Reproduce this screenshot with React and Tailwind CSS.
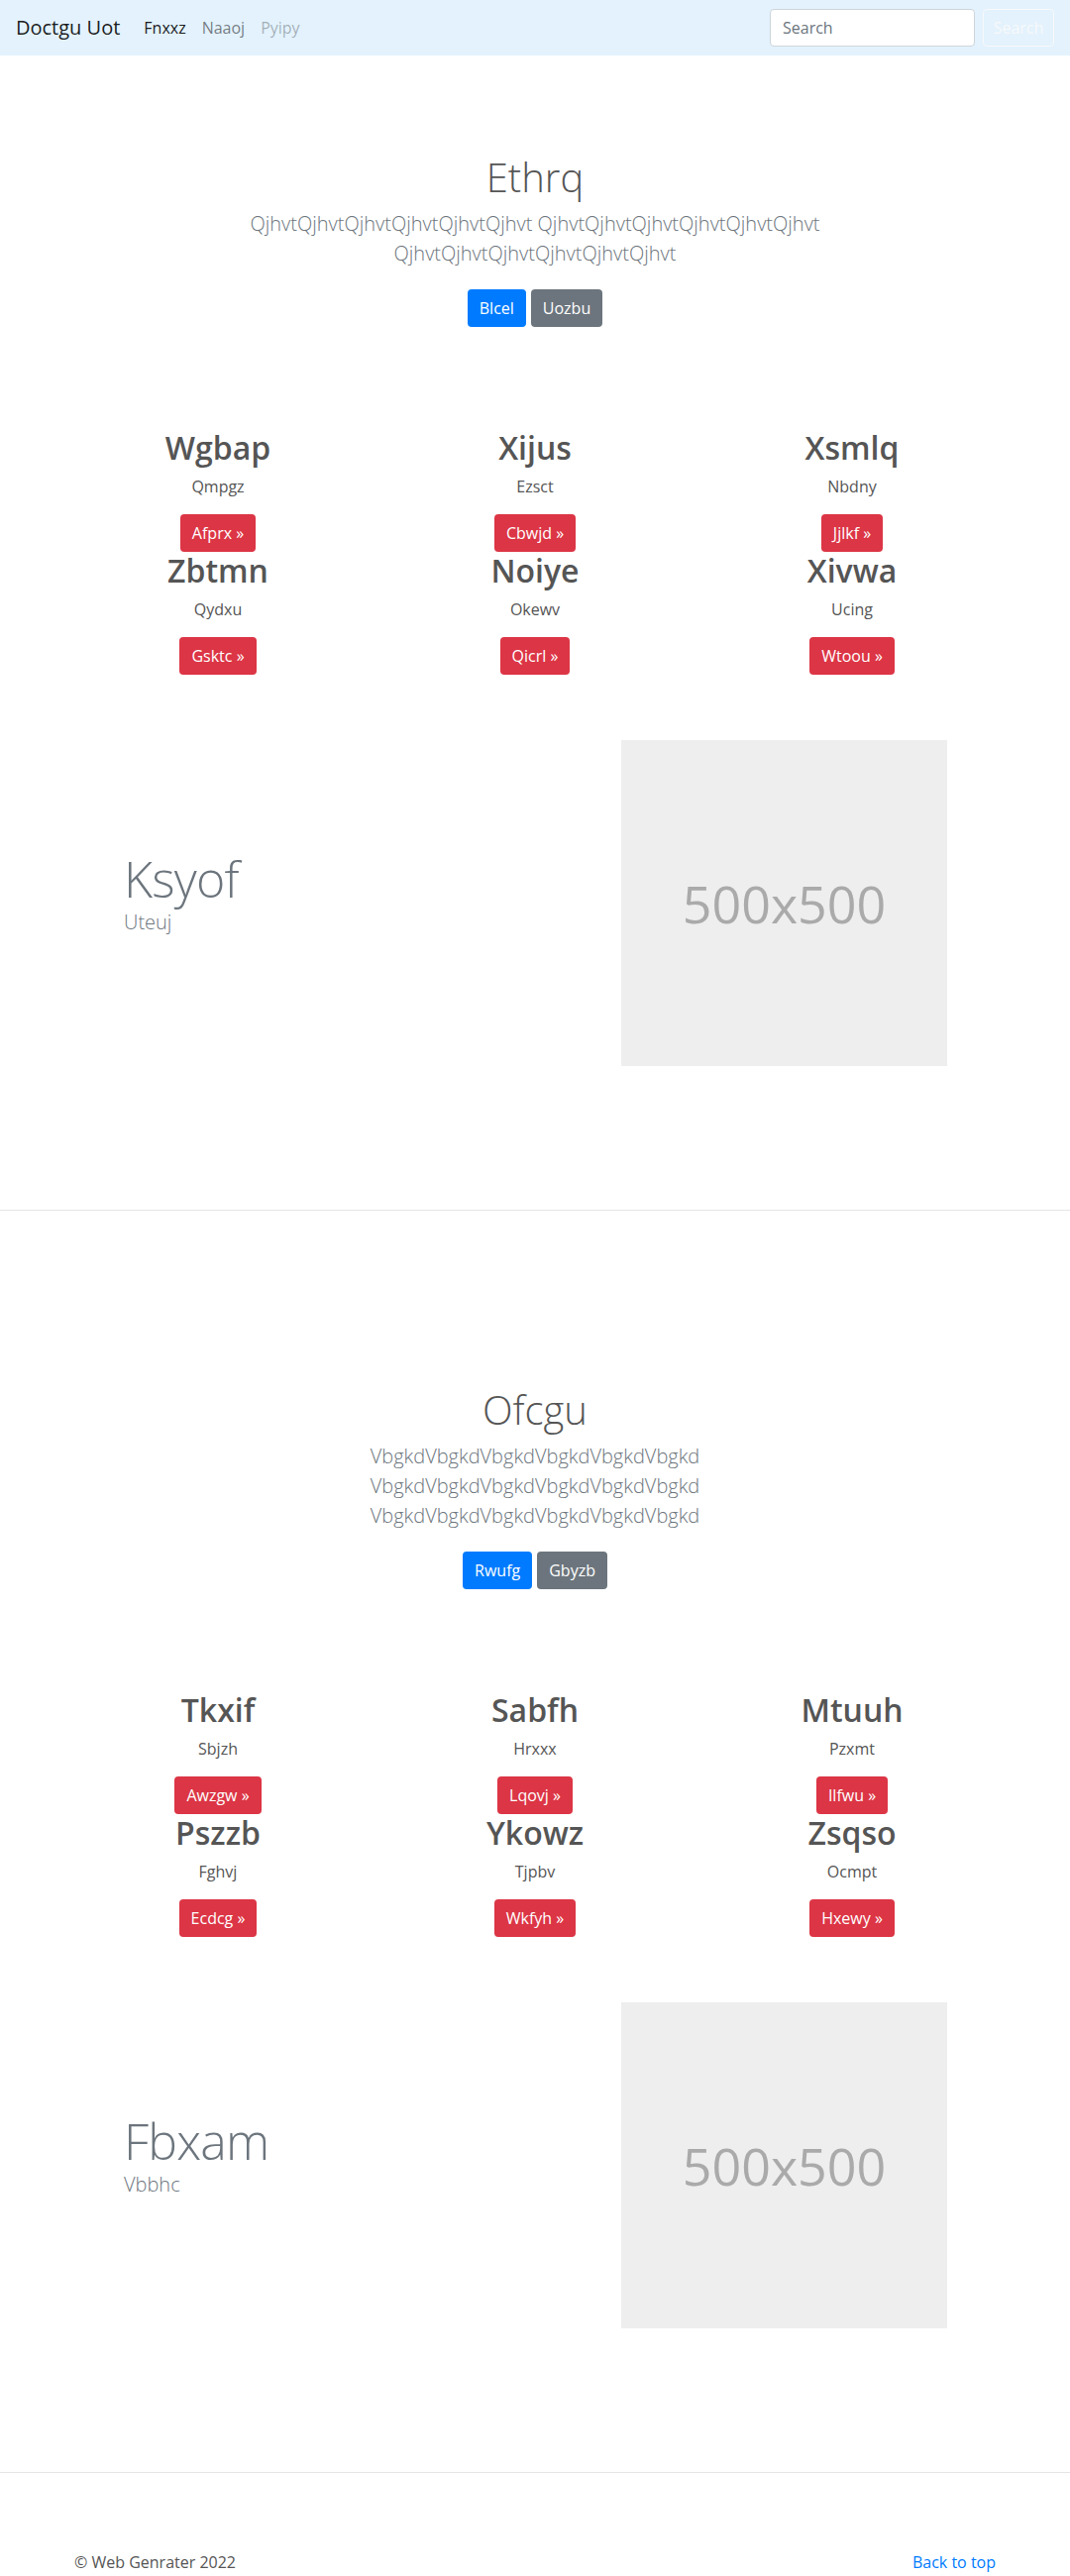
import React from "react";

const sections = [
  {
    title: "Ethrq",
    lead: "QjhvtQjhvtQjhvtQjhvtQjhvtQjhvt QjhvtQjhvtQjhvtQjhvtQjhvtQjhvt QjhvtQjhvtQjhvtQjhvtQjhvtQjhvt",
    primary: "Blcel",
    secondary: "Uozbu",
    features: [
      { title: "Wgbap", text: "Qmpgz", action: "Afprx" },
      { title: "Xijus", text: "Ezsct", action: "Cbwjd" },
      { title: "Xsmlq", text: "Nbdny", action: "Jjlkf" },
      { title: "Zbtmn", text: "Qydxu", action: "Gsktc" },
      { title: "Noiye", text: "Okewv", action: "Qicrl" },
      { title: "Xivwa", text: "Ucing", action: "Wtoou" }
    ],
    featurette: { title: "Ksyof", text: "Uteuj" }
  },
  {
    title: "Ofcgu",
    lead: "VbgkdVbgkdVbgkdVbgkdVbgkdVbgkd VbgkdVbgkdVbgkdVbgkdVbgkdVbgkd VbgkdVbgkdVbgkdVbgkdVbgkdVbgkd",
    primary: "Rwufg",
    secondary: "Gbyzb",
    features: [
      { title: "Tkxif", text: "Sbjzh", action: "Awzgw" },
      { title: "Sabfh", text: "Hrxxx", action: "Lqovj" },
      { title: "Mtuuh", text: "Pzxmt", action: "Ilfwu" },
      { title: "Pszzb", text: "Fghvj", action: "Ecdcg" },
      { title: "Ykowz", text: "Tjpbv", action: "Wkfyh" },
      { title: "Zsqso", text: "Ocmpt", action: "Hxewy" }
    ],
    featurette: { title: "Fbxam", text: "Vbbhc" }
  }
];

function Navbar() {
  return (
    <nav className="flex h-14 items-center bg-[#e3f2fd] px-4">
      <a href="#" className="mr-4 text-[20px] leading-[30px] text-black/90">
        Doctgu Uot
      </a>
      <ul className="flex text-base leading-6">
        <li>
          <a href="#" className="px-2 text-black/90">Fnxxz</a>
        </li>
        <li>
          <a href="#" className="px-2 text-black/50">Naaoj</a>
        </li>
        <li>
          <span className="px-2 text-black/30">Pyipy</span>
        </li>
      </ul>
      <form className="ml-auto flex items-center gap-2" onSubmit={(event) => event.preventDefault()}>
        <input
          type="text"
          placeholder="Search"
          className="h-[38px] w-[207px] rounded border border-[#ced4da] bg-white px-3 text-base text-[#495057] placeholder:text-[#6c757d] focus:outline-none"
        />
        <button type="submit" className="h-[38px] w-[72px] rounded border border-[#f8f9fa] text-base text-[#f8f9fa]">
          Search
        </button>
      </form>
    </nav>
  );
}

function Section({ section }) {
  return (
    <section>
      <div className="pt-[99px] text-center">
        <h1 className="mb-2 text-[40px] font-light leading-[48px] text-[#555]">{section.title}</h1>
        <p className="mx-auto mb-[21px] max-w-[610px] text-[20px] font-light leading-[30px] text-[#6c757d]">
          {section.lead}
        </p>
        <div className="flex justify-center gap-[5px]">
          <a href="#" className="inline-flex h-[38px] items-center rounded bg-[#007bff] px-3 text-base text-white">
            {section.primary}
          </a>
          <a href="#" className="inline-flex h-[38px] items-center rounded bg-[#6c757d] px-3 text-base text-white">
            {section.secondary}
          </a>
        </div>
      </div>

      <div className="mx-auto mt-[103px] grid w-[960px] grid-cols-3">
        {section.features.map((feature) => (
          <div key={feature.title} className="px-[15px] text-center">
            <h2 className="mb-2 text-[32px] font-semibold leading-[38px] text-[#555]">{feature.title}</h2>
            <p className="mb-4 text-base leading-6 text-[#555]">{feature.text}</p>
            <a href="#" className="inline-flex h-[38px] items-center rounded bg-[#dc3545] px-3 text-base text-white">
              {feature.action} &raquo;
            </a>
          </div>
        ))}
      </div>

      <div className="mx-auto mt-[66px] flex w-[960px] items-center">
        <div className="w-[567px] pl-[65px]">
          <h2 className="mb-1 text-[50px] font-light leading-none tracking-[-0.8px] text-[#6c757d]">
            {section.featurette.title}
          </h2>
          <p className="mb-4 text-[20px] font-light leading-[30px] text-[#6c757d]">{section.featurette.text}</p>
        </div>
        <div className="flex h-[329px] w-[329px] items-center justify-center bg-[#eeeeee]">
          <span className="text-[52px] text-[#aaaaaa]">500x500</span>
        </div>
      </div>

      <hr className="mb-[78px] mt-[145px] border-t border-[#e5e5e5]" />
    </section>
  );
}

export default function App() {
  return (
    <div className="min-h-screen bg-white font-['Open_Sans','Noto_Sans',sans-serif] text-[#555]">
      <Navbar />
      {sections.map((section) => (
        <Section key={section.title} section={section} />
      ))}
      <footer className="mx-auto flex w-[960px] justify-between px-[15px] pb-12 text-base leading-6">
        <p>&copy; Web Genrater 2022</p>
        <a href="#" className="text-[#007bff]">Back to top</a>
      </footer>
    </div>
  );
}
